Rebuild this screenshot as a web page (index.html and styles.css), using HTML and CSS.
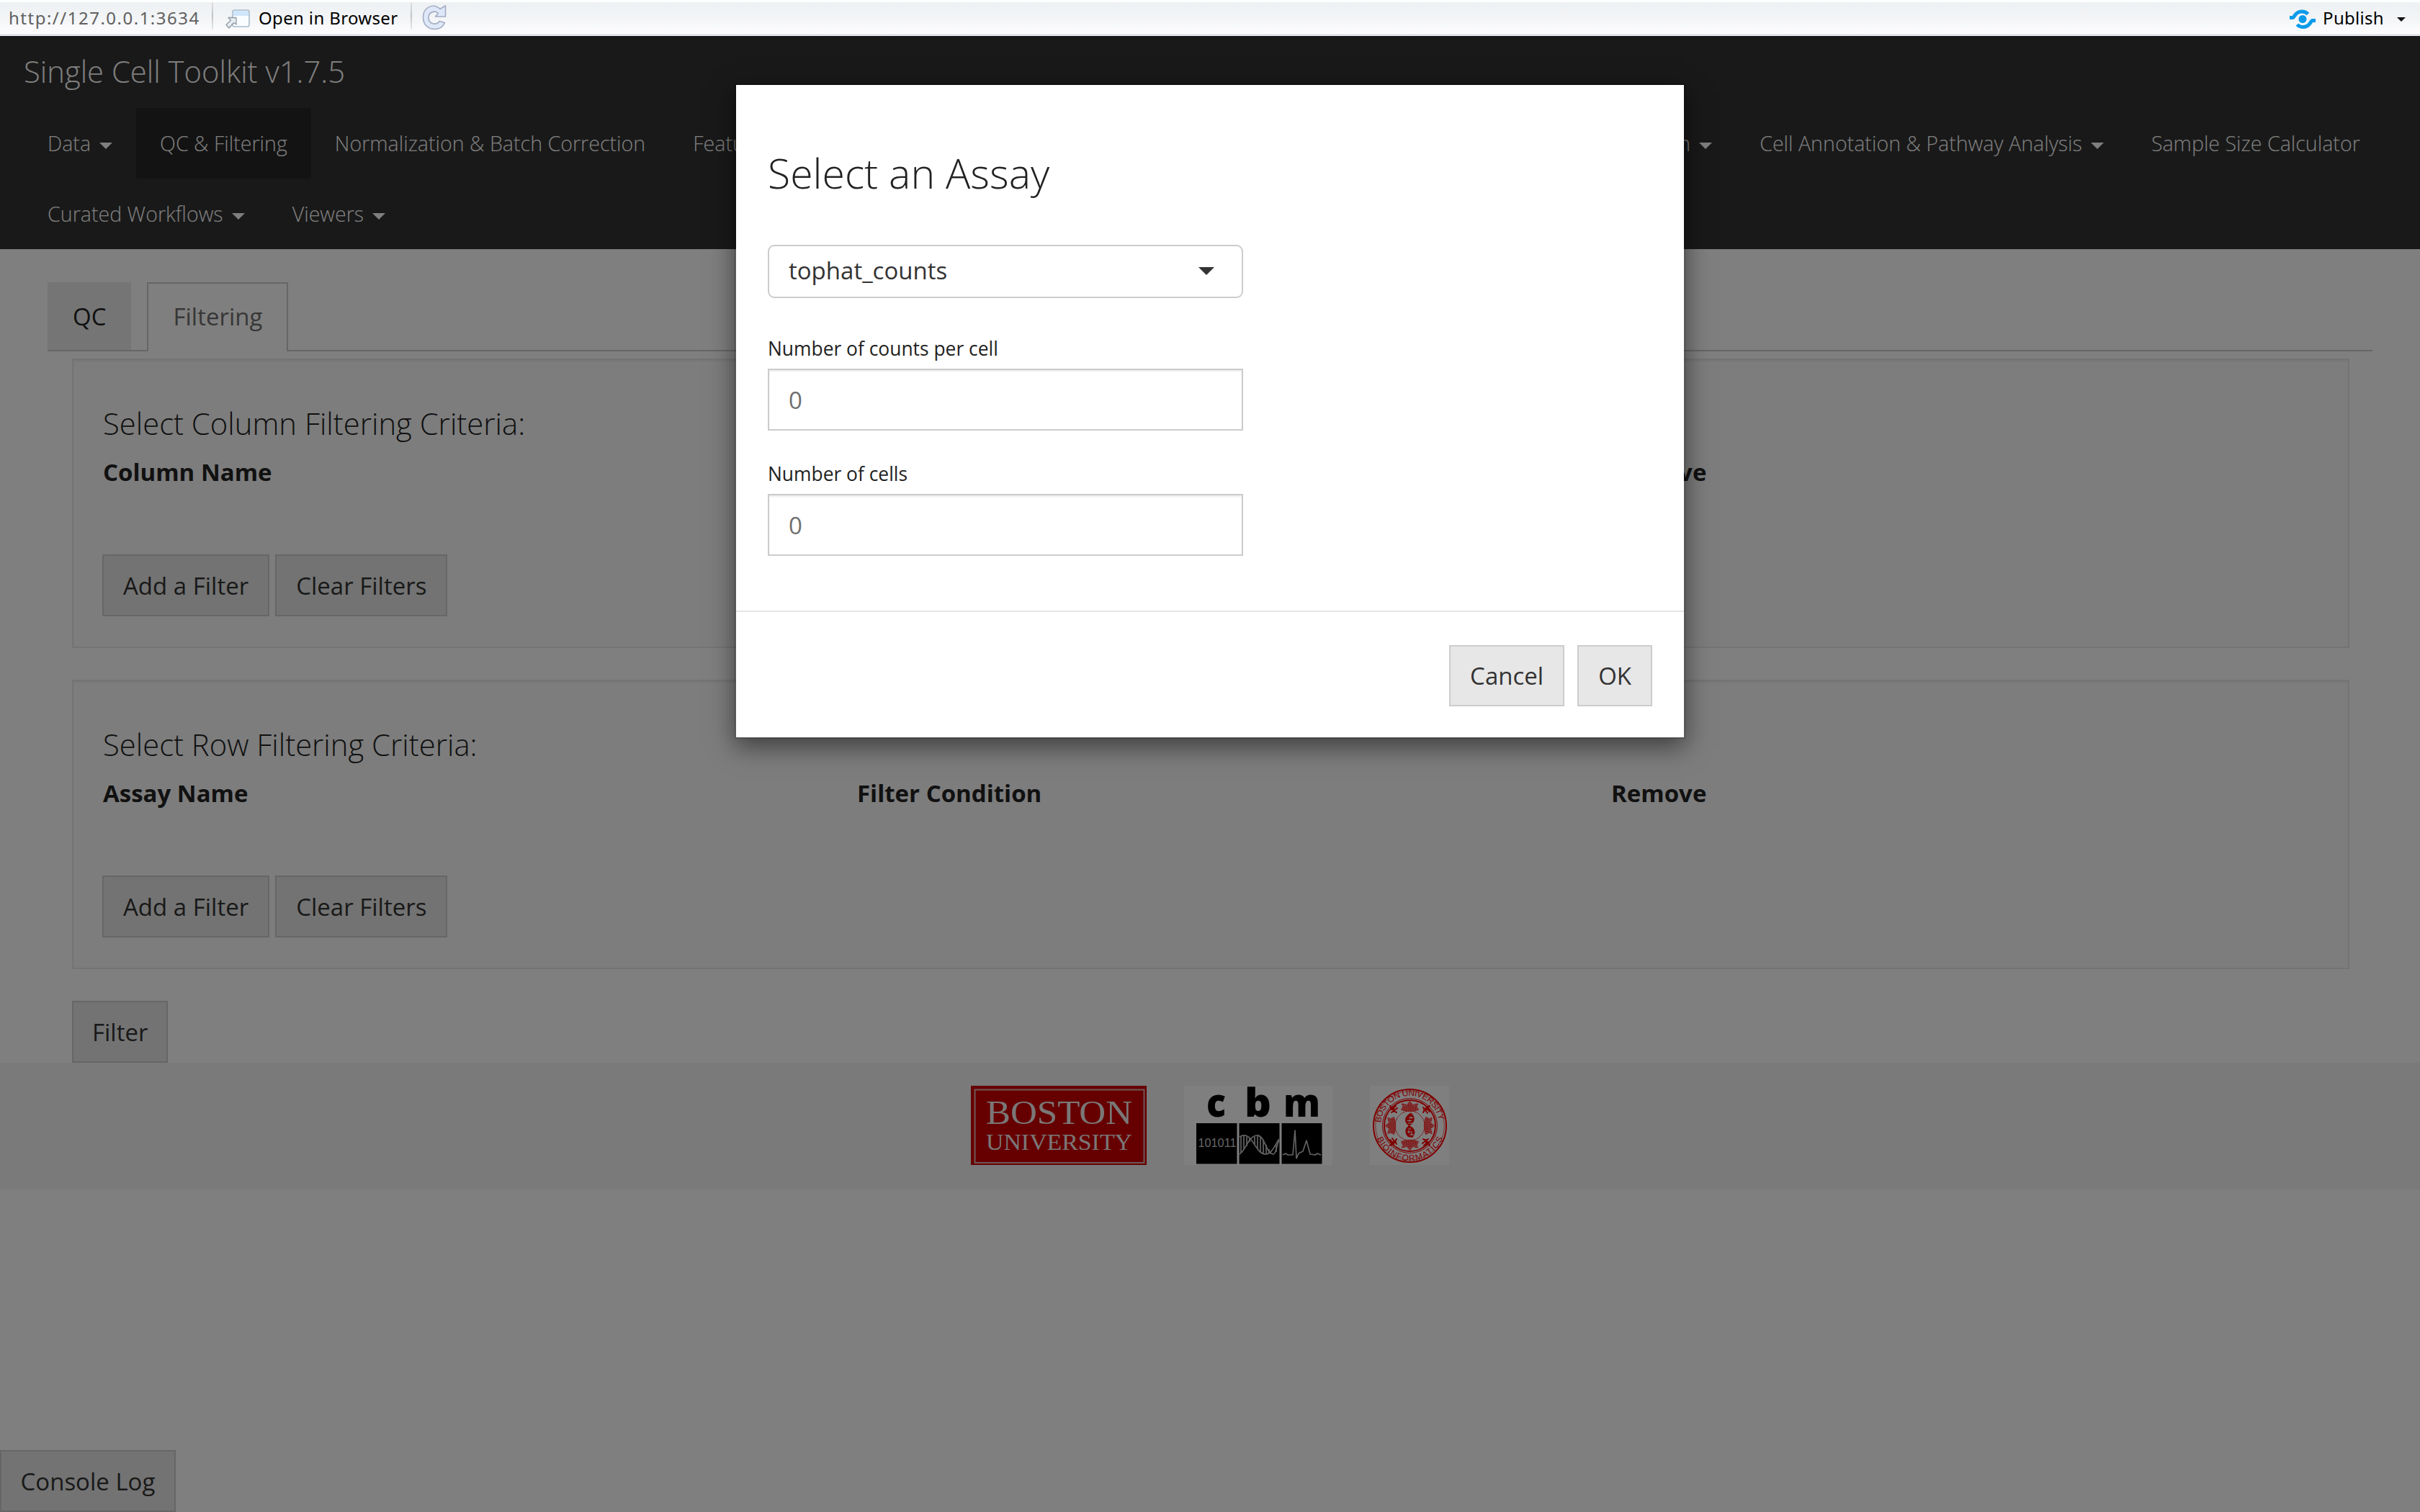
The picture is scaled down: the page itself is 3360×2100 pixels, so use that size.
FILE: index.html
```html
<!DOCTYPE html>
<html lang="en">
<head>
<meta charset="utf-8">
<title>Single Cell Toolkit</title>
<link rel="stylesheet" href="styles.css">
</head>
<body>
<div class="viewer-bar">
  <span class="url">http://127.0.0.1:3634</span>
  <span class="divider"></span>
  <svg class="icon-open" width="36" height="28" viewBox="0 0 36 28">
    <rect x="10" y="2" width="23" height="23" rx="2.5" fill="#fafdff" stroke="#a9bccb" stroke-width="1.6"/>
    <path d="M11 10V5q0-2 2-2h17q2 0 2 2v5z" fill="#cfe6fb"/>
    <path d="M4 12.500H15V22L11.500 19.500L5 27L1 22.500L7.500 16z" fill="#e7ecf1" stroke="#8f9ba6" stroke-width="1.300" stroke-linejoin="round"/>
  </svg>
  <span class="open">Open in Browser</span>
  <span class="divider divider-2"></span>
  <svg class="icon-refresh" width="34" height="36" viewBox="0 0 34 36">
    <path d="M25 6.500L32.500 2V17H18.500L22.500 12.500C19 8.500 9 9.500 9 18.500C9 28 20 29.500 24 23.500L31.500 25.500C29 31.500 24 34.500 17.500 34.500C8 34.500 1.500 28 1.500 18C1.500 4 15.500-2.500 25 6.500Z" fill="#dfe8f8" stroke="#a3acc2" stroke-width="1.600" stroke-linejoin="round"/>
  </svg>
  <svg class="icon-publish" width="36" height="28" viewBox="0 0 36 28">
    <g fill="none" stroke="#0c9bea" stroke-width="5">
      <path d="M0 11.500H4.500C7 11.500 7 3 17 3C21 3 23 4 25.500 6.500"/>
      <path d="M36 15.500H31.500C29 15.500 29 24.500 19 24.500C15 24.500 12.500 23.500 10.500 21"/>
    </g>
    <circle cx="18" cy="13.500" r="5.500" fill="#0c9bea"/>
  </svg>
  <span class="publish">Publish</span>
  <span class="publish-caret"></span>
</div>

<div class="app">
  <header class="navbar">
    <div class="brand">Single Cell Toolkit v1.7.5</div>
    <nav class="nav">
      <a>Data<i class="caret"></i></a>
      <a class="active">QC &amp; Filtering</a>
      <a>Normalization &amp; Batch Correction</a>
      <a>Feature Selection &amp; Dimensionality Reduction</a>
      <a>Clustering</a>
      <a class="push">Differential Expression &amp; Marker Selection<i class="caret"></i></a>
      <a>Cell Annotation &amp; Pathway Analysis<i class="caret"></i></a>
      <a>Sample Size Calculator</a>
    </nav>
    <nav class="nav">
      <a>Curated Workflows<i class="caret"></i></a>
      <a>Viewers<i class="caret"></i></a>
    </nav>
  </header>

  <main class="content">
    <div class="tabs">
      <a class="tab">QC</a>
      <a class="tab tab-active">Filtering</a>
    </div>
    <div class="pane">
      <section class="well">
        <h4>Select Column Filtering Criteria:</h4>
        <div class="cols"><b>Column Name</b><b>Filter Condition</b><b>Remove</b></div>
        <div class="btns"><button class="btn">Add a Filter</button><button class="btn">Clear Filters</button></div>
      </section>
      <section class="well">
        <h4>Select Row Filtering Criteria:</h4>
        <div class="cols"><b>Assay Name</b><b>Filter Condition</b><b>Remove</b></div>
        <div class="btns"><button class="btn">Add a Filter</button><button class="btn">Clear Filters</button></div>
      </section>
      <button class="btn">Filter</button>
    </div>
  </main>

  <footer class="footer">
    <svg width="244" height="110" viewBox="0 0 244 110">
      <rect width="244" height="110" fill="#c00"/>
      <rect x="5.500" y="5.500" width="235" height="101.500" fill="none" stroke="#e0b0b0" stroke-width="2"/>
      <g class="serif" fill="#f4eeee">
        <text x="21" y="52.500" font-size="46" textLength="203" lengthAdjust="spacingAndGlyphs">BOSTON</text>
        <text x="21" y="89" font-size="31" textLength="203" lengthAdjust="spacingAndGlyphs">UNIVERSITY</text>
      </g>
    </svg>
    <svg width="206" height="110" viewBox="0 0 206 110">
      <rect width="206" height="110" fill="#fff"/>
      <g class="cbm" font-size="54">
        <text x="31" y="42.500" textLength="27" lengthAdjust="spacingAndGlyphs">c</text>
        <text x="84" y="42.500" textLength="37" lengthAdjust="spacingAndGlyphs">b</text>
        <text x="138" y="42.500" textLength="51" lengthAdjust="spacingAndGlyphs">m</text>
      </g>
      <path d="M17 52H73.500V108.500H17zM76.500 52H132.500V108.500H76.500zM135.500 52H191.500V108.500H135.500z"/>
      <text class="bits" x="19.500" y="84.500" font-size="16.500" textLength="53" lengthAdjust="spacingAndGlyphs">101011</text>
      <g fill="none" stroke="#c4c4c4" stroke-width="1.700">
        <path d="M77 95C85 91 89 70 101 69C112 68 114 95 124 95C128 95 129 79 132 76"/>
        <path d="M77 71C88 64 94 76 98 82C104 91 108 96 114 95C123 94 127 80 132 74"/>
        <path d="M79 71V93M83 70V89M87 71V84M91 73V78M98 71V81M102 70V88M106 71V92M110 75V94M114 82V94M118 88V94M128 82V92"/>
        <path d="M137 96L141 94L144 96H151L154 62L156 101L159 94L165 91L170 76L175 95L182 96L185 94L190 96" stroke-linejoin="round"/>
      </g>
    </svg>
    <svg width="110" height="110" viewBox="0 0 110 110">
      <rect width="110" height="110" fill="#fff"/>
      <defs>
        <path id="ring-top" d="M15.100 51.500A40.500 40.500 0 0 1 95.900 51.500"/>
        <path id="ring-bottom" d="M6.500 55.500A49 49 0 0 0 104.500 55.500"/>
        <g id="crest">
          <path d="M43.500 33.500L46 28L44 25L48.500 25.500L51 27L55.500 21.500L60 27L62.500 25.500L67 25L65 28L67.500 33.500Q55.500 38 43.500 33.500Z" fill="#f66" stroke="#f22" stroke-width=".8"/>
          <path d="M51 28V35M54 25V35M57 25V35M60 28V35M47.500 29V34M63.500 29V34" stroke="#f00" stroke-width=".7"/>
        </g>
        <path id="leaf" d="M28 28Q31 34 37 37M30 33L36 28M30 37L38 31M29 32l3-3M33 36v-6" fill="none" stroke="#f00" stroke-width="2" stroke-linecap="round"/>
      </defs>
      <g fill="none" stroke="#f00">
        <circle cx="55.500" cy="55.500" r="50.500" stroke-width="2"/>
        <circle cx="55.500" cy="55.500" r="47.800" stroke-width=".6"/>
        <circle cx="55.500" cy="55.500" r="38" stroke-width="1"/>
        <circle cx="55.500" cy="55.500" r="35.500" stroke-width="2"/>
        <circle cx="55.500" cy="55.500" r="20.500" stroke-width="1" stroke-dasharray="2 .7"/>
      </g>
      <g class="seal" font-size="12">
        <text><textPath href="#ring-top" textLength="118" lengthAdjust="spacing">BOSTON UNIVERSITY</textPath></text>
        <text><textPath href="#ring-bottom" startOffset="18" textLength="118" lengthAdjust="spacing">BIOINFORMATICS</textPath></text>
      </g>
      <use href="#crest"/>
      <use href="#crest" transform="rotate(90 55.500 55.500)"/>
      <use href="#crest" transform="rotate(180 55.500 55.500)"/>
      <use href="#crest" transform="rotate(270 55.500 55.500)"/>
      <use href="#leaf"/>
      <use href="#leaf" transform="rotate(90 55.500 55.500)"/>
      <use href="#leaf" transform="rotate(180 55.500 55.500)"/>
      <use href="#leaf" transform="rotate(270 55.500 55.500)"/>
      <path d="M57 37.500C64 43 63 51 55 55.500C64 59 64 67 59 72L53 71C48 66 48 59 54 55.500C46 50 48 42 57 37.500Z" fill="#f00"/>
      <path d="M54 44.500H60M51.500 48.500H58M53 52H59M53 60H57M52 64H59M55 68H61M57 42V46M55 47V50M54 62V66M58 65V69" stroke="#fff" stroke-width="1.200"/>
    </svg>
  </footer>
  <button class="btn console">Console Log</button>

  <div class="backdrop">
    <div class="modal">
      <div class="modal-body">
        <h3>Select an Assay</h3>
        <div class="select"><span>tophat_counts</span><i></i></div>
        <label>Number of counts per cell</label>
        <div class="input">0</div>
        <label>Number of cells</label>
        <div class="input">0</div>
      </div>
      <div class="modal-footer">
        <button class="btn">Cancel</button>
        <button class="btn">OK</button>
      </div>
    </div>
  </div>
</div>
</body>
</html>
```
FILE: styles.css
```css
* { box-sizing: border-box; }

body {
  margin: 0;
  height: 2100px;
  display: flex;
  flex-direction: column;
  overflow: hidden;
  background: #fff;
  color: #222;
  font: 33px/46px "Open Sans", sans-serif;
}

/* viewer toolbar */
.viewer-bar {
  flex: none;
  height: 50px;
  display: flex;
  align-items: center;
  padding: 0 20px 0 12px;
  border-bottom: 3px solid #e4e7eb;
  background: linear-gradient(#fff 0, #fff 2px, #eef1f3 4px, #f2f4f6 24px, #fdfdfe 46px);
  color: #000;
  font: 24px/46px "Noto Sans", sans-serif;
}
.url, .open, .publish { padding-top: 2px; }
.url { width: 282px; color: #606060; letter-spacing: 1.5px; }
.divider { width: 2px; height: 38px; margin-top: -3px; background: linear-gradient(#dfe1e3, #c0c3c6, #e8eaec); }
.icon-open { margin: 4px 10px 0 17px; }
.open { width: 211px; letter-spacing: .35px; }
.icon-refresh { margin-left: 14px; }
.icon-publish { margin: 6px 10px 0 auto; }
.publish { letter-spacing: .3px; }
.publish-caret {
  margin: 7px 0 0 18px;
  border: 6.500px solid transparent;
  border-top-color: #111;
  border-bottom: 0;
}

/* application */
.app {
  position: relative;
  flex: 1;
  display: flex;
  flex-direction: column;
}
.navbar {
  height: 296px;
  background: #333;
  color: #fff;
  font-weight: 300;
}
.brand { height: 100px; padding-left: 33px; font-size: 41.800px; line-height: 97px; }
.nav { display: flex; height: 98px; padding: 0 54px 0 33px; font-size: 28.600px; line-height: 98px; }
.nav a { display: flex; align-items: center; padding: 0 33px; white-space: nowrap; }
.nav .active { background: #272727; }
.nav .push { margin-left: auto; }
.caret {
  margin: 6px 0 0 12px;
  border: 9px solid transparent;
  border-top-color: #fff;
  border-bottom: 0;
}

.content { padding: 46px 66px 0; }
.tabs { display: flex; gap: 22px; height: 96px; border-bottom: 2px solid #ccc; }
.tab { height: 94px; padding: 25px 35px; background: #ebebeb; color: #222; }
.tab-active {
  height: 96px;
  padding: 23px 34px;
  border: 2px solid #ccc;
  border-bottom: 0;
  background: #fff;
  color: #6f6f6f;
}
.pane { padding: 10px 32px 0 34px; }
.well {
  height: 402px;
  margin-bottom: 44px;
  padding: 65px 40px 0;
  border: 2px solid #e8e8e8;
  background: #fafafa;
  box-shadow: inset 0 2px 2px rgba(0, 0, 0, .05);
}
h4 { margin: 0 0 22px 1px; font-size: 41.800px; line-height: 46px; font-weight: 300; }
.cols { display: grid; grid-template-columns: repeat(3, 1fr); margin: 0 -64px 0 1px; }
.btns { display: flex; gap: 8px; margin-top: 91px; }
.btn {
  height: 86px;
  padding: 1px 27px 0;
  border: 2px solid #ccc;
  border-radius: 0;
  background: #e7e7e7;
  color: #333;
  font: 33px/46px "Open Sans", sans-serif;
}
.pane > .btn { display: block; padding: 1px 26px 0; }

.footer {
  display: flex;
  justify-content: center;
  gap: 52px;
  height: 176px;
  padding-top: 32px;
  background: #f5f5f5;
}
.footer svg { overflow: visible; }
.serif { font-family: "Liberation Serif", serif; }
.cbm { font-family: "Open Sans", sans-serif; font-weight: 800; }
.bits { font-family: "Liberation Sans", sans-serif; fill: #ccc; }
.seal { font-family: "Liberation Sans", sans-serif; fill: #f00; }
.console { align-self: flex-start; margin-top: auto; padding: 2px 26.500px 0; }

/* dialog over the dimmed page */
.backdrop {
  position: absolute;
  inset: 0;
  display: flex;
  justify-content: center;
  align-items: flex-start;
  padding-top: 66px;
  background: rgba(0, 0, 0, .5);
}
.modal {
  width: 1320px;
  height: 910px;
  border: 2px solid rgba(0, 0, 0, .2);
  background: #fff;
  background-clip: padding-box;
  box-shadow: 0 11px 33px rgba(0, 0, 0, .5);
}
.modal-body { height: 730px; padding: 90px 44px 0; }
h3 { margin: 0 0 68px; font-size: 57.200px; line-height: 64px; font-weight: 300; }
.select {
  display: flex;
  justify-content: space-between;
  align-items: center;
  width: 660px;
  height: 74px;
  margin-bottom: 52px;
  padding: 0 38px 2px 27px;
  border: 2px solid #ccc;
  border-radius: 9px;
  color: #333;
}
.select i { border: 11px solid transparent; border-top-color: #333; border-bottom: 0; }
label { display: block; font-size: 26.400px; line-height: 37px; margin-bottom: 9px; }
.input {
  width: 660px;
  height: 86px;
  margin-bottom: 42px;
  padding: 19px 27px;
  border: 2px solid #ccc;
  box-shadow: inset 0 2px 2px rgba(0, 0, 0, .075);
  color: #6f6f6f;
}
.modal-footer {
  display: flex;
  justify-content: flex-end;
  gap: 18px;
  padding: 46px 44px 0;
  border-top: 2px solid #e5e5e5;
}
.modal-footer .btn { height: 85px; padding-top: 0; }
```
